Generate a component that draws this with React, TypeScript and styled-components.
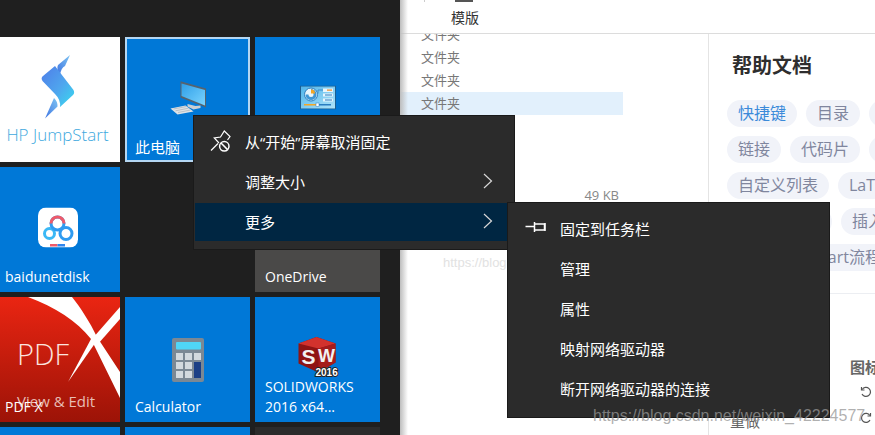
import styled, { createGlobalStyle } from 'styled-components';

const GlobalStyle = createGlobalStyle`
  html, body {
    margin: 0;
    padding: 0;
    background: #fff;
    overflow: hidden;
  }
`;

const FONT = `"Open Sans", "Noto Sans CJK SC", sans-serif`;

const Page = styled.div`
  position: relative;
  width: 875px;
  height: 435px;
  display: flex;
  overflow: hidden;
  font-family: ${FONT};
`;

const StartMenu = styled.div`
  width: 400px;
  flex: none;
  height: 100%;
  background: #1f1f1f;
  padding-top: 37px;
  box-sizing: border-box;
  overflow: hidden;
`;

const TileGrid = styled.div`
  display: grid;
  grid-template-columns: repeat(3, 125px);
  grid-auto-rows: 125px;
  gap: 5px;
  margin-left: -5px;
`;

const Tile = styled.div<{ $bg?: string; $focus?: boolean }>`
  position: relative;
  overflow: hidden;
  box-sizing: border-box;
  background: ${(p) => p.$bg ?? '#0078d7'};
  border: ${(p) => (p.$focus ? '2px solid #b4d6f2' : 'none')};
  display: flex;
  align-items: center;
  justify-content: center;
`;

const TileLabel = styled.div<{ $focus?: boolean }>`
  position: absolute;
  left: ${(p) => (p.$focus ? '8px' : '10px')};
  bottom: ${(p) => (p.$focus ? '3px' : '5px')};
  color: #fff;
  font-size: ${(p) => (p.$focus ? '15px' : '14px')};
  line-height: 20px;
`;

const TileArt = styled.svg`
  position: absolute;
  left: 0;
  top: 0;
`;

const IconSlot = styled.div<{ $y?: number }>`
  display: flex;
  transform: translateY(${(p) => p.$y ?? 0}px);
`;

const Explorer = styled.div`
  flex: 1;
  min-width: 0;
  display: flex;
  flex-direction: column;
  position: relative;
  isolation: isolate;
  background: #fff;

  &::before {
    content: '';
    position: absolute;
    left: 0;
    top: 0;
    bottom: 0;
    width: 8px;
    background: linear-gradient(to right, #bdbdbd, rgba(255, 255, 255, 0));
    z-index: 1;
  }
`;

const Ribbon = styled.div`
  height: 33px;
  flex: none;
  position: relative;
  border-bottom: 1px solid #dcdcdc;
  padding-left: 51px;
  font-size: 14px;
  line-height: 36px;
  color: #333;
`;

const RibbonIconStub = styled.span`
  position: absolute;
  left: 55px;
  top: 0;
  width: 18px;
  height: 2px;
  background: #555;
`;

const RibbonSeparator = styled.span`
  position: absolute;
  left: 24px;
  top: 0;
  width: 1px;
  height: 2px;
  background: #ccc;
`;

const Body = styled.div`
  flex: 1;
  display: flex;
  min-height: 0;
`;

const FileList = styled.div`
  width: 308px;
  flex: none;
  border-right: 1px solid #e4e4e4;
  overflow: hidden;
`;

const FileRows = styled.div`
  margin-top: -11px;
  width: 223px;
`;

const FileRow = styled.div<{ $selected?: boolean }>`
  height: 23px;
  padding-left: 21px;
  font-size: 13px;
  line-height: 23px;
  color: #777;
  background: ${(p) => (p.$selected ? '#e2f0fc' : 'transparent')};
`;

const FileSize = styled.div`
  margin-top: 72px;
  width: 219px;
  text-align: right;
  font-size: 13px;
  line-height: 16px;
  color: #888;
`;

const HelpPanel = styled.div`
  flex: 1;
  min-width: 0;
  overflow: hidden;
  padding: 18px 0 0 18px;
  position: relative;
`;

const HelpTitle = styled.h2`
  margin: 0 0 20px 5px;
  font-size: 20px;
  line-height: 28px;
  font-weight: 700;
  color: #2e2e2e;
`;

const TagRows = styled.div`
  display: flex;
  flex-direction: column;
  gap: 9px;
  width: 300px;
`;

const TagRow = styled.div<{ $indent?: number }>`
  display: flex;
  gap: 9px;
  margin-left: ${(p) => p.$indent ?? 0}px;
`;

const Tag = styled.span<{ $active?: boolean }>`
  flex: none;
  height: 27px;
  padding: 0 11px;
  border-radius: 14px;
  background: #f1f3f9;
  color: ${(p) => (p.$active ? '#3b8ad9' : '#80869e')};
  font-size: 16px;
  line-height: 26px;
  white-space: nowrap;
`;

const Divider = styled.div`
  height: 1px;
  background: #eceef2;
  margin: 22px 0 0 0;
  width: 200px;
`;

const ToolsHeading = styled.div`
  margin: 63px 0 2px 123px;
  font-size: 15px;
  line-height: 20px;
  font-weight: 700;
  color: #666;
  white-space: nowrap;
`;

const ToolRow = styled.div`
  display: flex;
  align-items: center;
  height: 26px;
  padding-left: 133px;
`;

const ToolGlyph = styled.svg<{ $flip?: boolean }>`
  transform: ${(p) => (p.$flip ? 'scaleX(-1)' : 'none')};
`;

const ToolCaption = styled.div`
  position: absolute;
  left: 21px;
  top: 377px;
  font-size: 15px;
  line-height: 20px;
  color: #666;
`;

const Menu = styled.div<{ $x: number; $y: number; $w: number; $h: number }>`
  position: absolute;
  left: ${(p) => p.$x}px;
  top: ${(p) => p.$y}px;
  width: ${(p) => p.$w}px;
  height: ${(p) => p.$h}px;
  box-sizing: border-box;
  background: #2b2b2b;
  border: 1px solid #1a1a1a;
  padding: 7px 1px 0;
  color: #fff;
  display: flex;
  flex-direction: column;
  gap: 2px;
`;

const MenuItem = styled.div<{ $active?: boolean }>`
  height: 38px;
  box-sizing: border-box;
  padding-bottom: 2px;
  flex: none;
  display: flex;
  align-items: center;
  background: ${(p) => (p.$active ? '#002642' : 'transparent')};
  font-size: 15px;
`;

const MenuIcon = styled.span<{ $w?: number }>`
  width: ${(p) => p.$w ?? 50}px;
  flex: none;
  display: flex;
  justify-content: center;
  align-items: center;
`;

const MenuText = styled.span`
  flex: 1;
  white-space: nowrap;
`;

const Chevron = styled.svg`
  margin-right: 20px;
  flex: none;
`;

const Watermark = styled.div<{ $x: number; $y: number; $size: number; $color: string }>`
  position: absolute;
  left: ${(p) => p.$x}px;
  top: ${(p) => p.$y}px;
  font-family: "Liberation Sans", sans-serif;
  font-size: ${(p) => p.$size}px;
  line-height: 1;
  color: ${(p) => p.$color};
  white-space: nowrap;
  pointer-events: none;
`;

const HpLogo = () => (
  <TileArt width="125" height="125" viewBox="0 0 125 125">
    <defs>
      <linearGradient id="hpA" x1="0" y1="0" x2="1" y2="1">
        <stop offset="0" stopColor="#4f7de8" />
        <stop offset="0.55" stopColor="#4fa6ee" />
        <stop offset="1" stopColor="#37dcef" />
      </linearGradient>
      <linearGradient id="hpB" x1="0" y1="1" x2="1" y2="0">
        <stop offset="0" stopColor="#3f74e2" />
        <stop offset="1" stopColor="#7ec4f2" />
      </linearGradient>
    </defs>
    <path d="M75 18L63 28Q61 32 65 38Q66 31 70 29z" fill="url(#hpB)" />
    <path d="M60 29L78.500 53Q80 56 78 58L65 70Q66 63 60 57L47.500 44Q45.500 41 48 39z" fill="url(#hpA)" />
    <path d="M50 81.500L59 61Q63 65 62.500 69.500z" fill="url(#hpB)" />
    <text x="62.500" y="104" textAnchor="middle" fontFamily={`"Open Sans", sans-serif`} fontSize="17" fill="#3fa9de" fontWeight="300">
      HP JumpStart
    </text>
  </TileArt>
);

const PcIcon = () => (
  <svg width="40" height="36" viewBox="167.500 78.500 40 36">
    <defs>
      <linearGradient id="pcScreen" x1="0" y1="0" x2="1" y2="1">
        <stop offset="0" stopColor="#2f9fe8" />
        <stop offset="1" stopColor="#7ad4ff" />
      </linearGradient>
    </defs>
    <path d="M180 80.700L205.500 88V107L180 97z" fill="#56636e" />
    <path d="M181 83L204.500 89.500V105L181 95.500z" fill="url(#pcScreen)" />
    <path d="M187 103.500L195 105.500L200 105V107.500L193 109L187 106z" fill="#c9ced3" />
    <path d="M170 108L185 105L193 111L177 114z" fill="#dfe3e6" />
    <path d="M173 108.500L186 106M175 110.300L188 107.700M177.500 112L190 109.500" stroke="#a0a8ae" strokeWidth=".6" />
  </svg>
);

const PanelIcon = () => (
  <svg width="36" height="24" viewBox="0 0 36 24">
    <defs>
      <linearGradient id="panelBg" x1="0" y1="0" x2="1" y2="1">
        <stop offset="0" stopColor="#4fb4ea" />
        <stop offset="1" stopColor="#b0e4fa" />
      </linearGradient>
    </defs>
    <rect x=".5" y=".5" width="35" height="23" fill="url(#panelBg)" stroke="#1c5f91" />
    <circle cx="11" cy="9" r="6.500" fill="#e8f5fc" stroke="#2e7fbf" />
    <path d="M11 9H5.500A5.500 5.500 0 1 0 11 3.500z" fill="#3f97d6" />
    <circle cx="11" cy="9" r="2.500" fill="#e8f5fc" />
    <path d="M11 8V4a4 4 0 0 1 4 4z" fill="#f5a623" />
    <rect x="23" y="3" width="10" height="3.500" fill="#e8f5fc" />
    <rect x="27" y="4" width="5" height="1.200" fill="#f08a24" />
    <rect x="23" y="8" width="10" height="3" fill="#e8f5fc" />
    <rect x="25" y="9" width="7" height="1" fill="#2a7dc0" />
    <rect x="23" y="13" width="10" height="3" fill="#e8f5fc" />
    <rect x="25" y="14" width="7" height="1" fill="#2a7dc0" />
    <path d="M18 8V4.500H23" stroke="#3b8ccc" fill="none" />
    <rect x="4" y="18.500" width="13" height="1.500" fill="#f5a623" />
    <rect x="18" y="18.500" width="13" height="1.500" fill="#2a7dc0" />
    <rect x="16" y="17.500" width="3" height="3.500" fill="#fff" stroke="#2a7dc0" strokeWidth=".5" />
  </svg>
);

const BaiduIcon = () => (
  <svg width="40" height="40" viewBox="0 0 40 40">
    <rect width="40" height="40" rx="8" fill="#fff" />
    <circle cx="11.500" cy="26" r="5" fill="none" stroke="#3bb8f5" strokeWidth="3" />
    <circle cx="28" cy="26" r="6" fill="none" stroke="#2f9bf0" strokeWidth="3" />
    <circle cx="19.500" cy="16" r="6.500" fill="none" stroke="#2f9bf0" strokeWidth="3" />
    <path d="M13 16a6.500 6.500 0 0 1 13 0" fill="none" stroke="#ef5a6a" strokeWidth="3" />
    <rect x="12" y="36.500" width="7.500" height="2.500" fill="#ef5a6a" />
    <rect x="19.500" y="36.500" width="7.500" height="2.500" fill="#2f86ee" />
  </svg>
);

const CalcIcon = () => (
  <svg width="32" height="44" viewBox="0 0 32 44">
    <rect x="0" y="0" width="32" height="44" rx="2" fill="#7b8894" />
    <rect x="4" y="4" width="25" height="7.500" rx="1" fill="#4fd6f7" />
    {[4, 13, 22].map((x) => (
      <rect key={x} x={x} y="15" width="7" height="7" fill="#d3d9de" />
    ))}
    {[4, 13].map((x) => (
      <rect key={x} x={x} y="24" width="7" height="7" fill="#d3d9de" />
    ))}
    {[4, 13].map((x) => (
      <rect key={x} x={x} y="33" width="7" height="7" fill="#d3d9de" />
    ))}
    <rect x="22" y="24" width="7" height="16" fill="#1b3f86" />
  </svg>
);

const SwIcon = () => (
  <svg width="42" height="40" viewBox="296.500 336.500 42 40">
    <path d="M298 343L316 336.500L335 343V362L318 372L298 363z" fill="#8f1414" />
    <path d="M298 343L316 336.500L335 343L318 348z" fill="#d2322d" />
    <path d="M318 348L335 343V362L318 372z" fill="#a51c1c" />
    <text x="301" y="363" fontFamily={`"Liberation Sans", sans-serif`} fontWeight="700" fontSize="21" fill="#f2f2f2">S</text>
    <text x="317.500" y="361" fontFamily={`"Liberation Sans", sans-serif`} fontWeight="700" fontSize="18" fill="#f2f2f2">W</text>
    <text x="315" y="375" fontFamily={`"Liberation Sans", sans-serif`} fontWeight="700" fontSize="10" fill="#fff" stroke="#222" strokeWidth="2" paintOrder="stroke">2016</text>
  </svg>
);

const PdfTile = () => (
  <TileArt width="125" height="125" viewBox="0 0 125 125">
    <defs>
      <linearGradient id="pdfBg" x1="0" y1="0" x2="0" y2="1">
        <stop offset="0" stopColor="#ea2512" />
        <stop offset="1" stopColor="#9c1307" />
      </linearGradient>
    </defs>
    <rect width="125" height="125" fill="url(#pdfBg)" />
    <path d="M33 0C60 10 82 24 96 42L125 101V75L102 40C95 25 85 10 77 0z" fill="#fff" />
    <path d="M125 10L97 42L103 47L125 22z" fill="#fff" />
    <path d="M73 85L96 42L103 42z" fill="#fff" />
    <text x="22" y="68" fontFamily={`"Open Sans", sans-serif`} fontSize="29" fontWeight="300" fill="#fbe4df">PDF</text>
    <text x="22" y="110" fontFamily={`"Open Sans", sans-serif`} fontSize="15" fill="#e8bdb4">View &amp; Edit</text>
  </TileArt>
);

const UnpinIcon = () => (
  <svg width="22" height="22" viewBox="0 0 22 22" fill="none" stroke="#fff" strokeWidth="1.200">
    <path d="M2 20.500L9 13.500" />
    <path d="M10 13L5.300 8L11.500 7L15.300 1L21 6.500L18.500 10" />
    <circle cx="15.300" cy="16.300" r="4.700" strokeWidth="1.500" />
    <path d="M12 13L18.600 19.600" strokeWidth="1.500" />
  </svg>
);

const PinIcon = () => (
  <svg width="26" height="12" viewBox="0 0 26 12" fill="none" stroke="#fff" strokeWidth="1.500">
    <path d="M3.500 4.500H12.500" />
    <path d="M12.500 0V10" />
    <path d="M12.500 2H22.500V8H12.500" />
    <path d="M23 1V9" />
  </svg>
);

const ArrowRight = () => (
  <Chevron width="10" height="16" viewBox="0 0 10 16" fill="none" stroke="#d8d8d8" strokeWidth="1.200">
    <path d="M1 1l7.500 7L1 15" />
  </Chevron>
);

const ToolIcon = ({ flip }: { flip?: boolean }) => (
  <ToolGlyph $flip={flip} width="12" height="12" viewBox="0 0 12 12" fill="none" stroke="#555" strokeWidth="1.200">
    <path d="M2.200 3.500A4.500 4.500 0 1 1 2 8" />
    <path d="M1.500 1v3h3" />
  </ToolGlyph>
);

export default function App() {
  return (
    <>
      <GlobalStyle />
      <Page>
        <StartMenu>
          <TileGrid>
            <Tile $bg="#fff">
              <HpLogo />
            </Tile>
            <Tile $focus>
              <IconSlot $y={-3}>
                <PcIcon />
              </IconSlot>
              <TileLabel $focus>此电脑</TileLabel>
            </Tile>
            <Tile>
              <IconSlot $y={-2.5}>
                <PanelIcon />
              </IconSlot>
            </Tile>
            <Tile>
              <IconSlot $y={-2.5}>
                <BaiduIcon />
              </IconSlot>
              <TileLabel>baidunetdisk</TileLabel>
            </Tile>
            <Tile $bg="transparent" />
            <Tile $bg="#4a4948">
              <TileLabel>OneDrive</TileLabel>
            </Tile>
            <Tile>
              <PdfTile />
              <TileLabel>PDF X</TileLabel>
            </Tile>
            <Tile>
              <CalcIcon />
              <TileLabel>Calculator</TileLabel>
            </Tile>
            <Tile>
              <IconSlot $y={-3}>
                <SwIcon />
              </IconSlot>
              <TileLabel>
                SOLIDWORKS
                <br />
                2016 x64...
              </TileLabel>
            </Tile>
            <Tile />
            <Tile />
            <Tile $bg="#2b2b2b" />
          </TileGrid>
        </StartMenu>
        <Explorer>
          <Ribbon>
            <RibbonSeparator />
            <RibbonIconStub />
            模版
          </Ribbon>
          <Body>
            <FileList>
              <FileRows>
                <FileRow>文件夹</FileRow>
                <FileRow>文件夹</FileRow>
                <FileRow>文件夹</FileRow>
                <FileRow $selected>文件夹</FileRow>
              </FileRows>
              <FileSize>49 KB</FileSize>
            </FileList>
            <HelpPanel>
              <HelpTitle>帮助文档</HelpTitle>
              <TagRows>
                <TagRow>
                  <Tag $active>快捷键</Tag>
                  <Tag>目录</Tag>
                  <Tag>标题</Tag>
                </TagRow>
                <TagRow>
                  <Tag>链接</Tag>
                  <Tag>代码片</Tag>
                  <Tag>表格</Tag>
                </TagRow>
                <TagRow>
                  <Tag>自定义列表</Tag>
                  <Tag>LaTeX</Tag>
                </TagRow>
                <TagRow $indent={51}>
                  <Tag>注脚</Tag>
                  <Tag>插入</Tag>
                </TagRow>
                <TagRow $indent={38}>
                  <Tag>Flowchart流程图</Tag>
                </TagRow>
              </TagRows>
              <Divider />
              <ToolsHeading>图标</ToolsHeading>
              <ToolRow>
                <ToolIcon />
              </ToolRow>
              <ToolRow>
                <ToolIcon flip />
              </ToolRow>
              <ToolCaption>重做</ToolCaption>
            </HelpPanel>
          </Body>
        </Explorer>
        <Watermark $x={443} $y={256} $size={13} $color="#e2e2e2">https://blog.csdn.net</Watermark>
        <Menu $x={193} $y={115} $w={322} $h={135}>
          <MenuItem>
            <MenuIcon>
              <UnpinIcon />
            </MenuIcon>
            <MenuText>从“开始”屏幕取消固定</MenuText>
          </MenuItem>
          <MenuItem>
            <MenuIcon />
            <MenuText>调整大小</MenuText>
            <ArrowRight />
          </MenuItem>
          <MenuItem $active>
            <MenuIcon />
            <MenuText>更多</MenuText>
            <ArrowRight />
          </MenuItem>
        </Menu>
        <Menu $x={507} $y={202} $w={323} $h={216}>
          <MenuItem>
            <MenuIcon $w={51}>
              <PinIcon />
            </MenuIcon>
            <MenuText>固定到任务栏</MenuText>
          </MenuItem>
          <MenuItem>
            <MenuIcon $w={51} />
            <MenuText>管理</MenuText>
          </MenuItem>
          <MenuItem>
            <MenuIcon $w={51} />
            <MenuText>属性</MenuText>
          </MenuItem>
          <MenuItem>
            <MenuIcon $w={51} />
            <MenuText>映射网络驱动器</MenuText>
          </MenuItem>
          <MenuItem>
            <MenuIcon $w={51} />
            <MenuText>断开网络驱动器的连接</MenuText>
          </MenuItem>
        </Menu>
        <Watermark $x={593} $y={408} $size={16} $color="rgba(150,150,150,0.75)">https://blog.csdn.net/weixin_42224577</Watermark>
      </Page>
    </>
  );
}
